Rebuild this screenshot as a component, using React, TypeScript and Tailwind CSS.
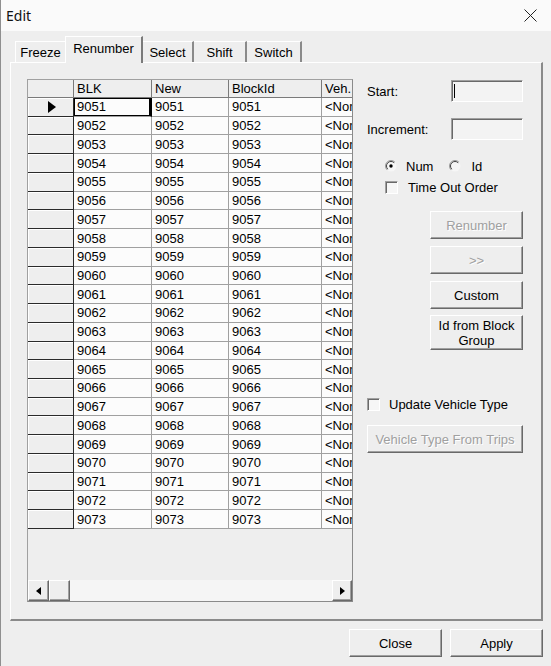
const rows = Array.from({ length: 23 }, (_, i) => String(9051 + i));

const raised =
  "border border-t-white border-l-white border-r-[#696969] border-b-[#696969] shadow-[inset_-1px_-1px_0_#a0a0a0]";
const sunken =
  "border border-t-[#a0a0a0] border-l-[#a0a0a0] border-r-white border-b-white shadow-[inset_1px_1px_0_#696969]";

function Radio({ checked }: { checked?: boolean }) {
  return (
    <svg width="12" height="12" viewBox="0 0 12 12" className="shrink-0">
      <circle cx="6" cy="6" r="5.5" fill="#f6f6f6" />
      <path d="M2.1 9.9 A5.5 5.5 0 0 1 9.9 2.1" fill="none" stroke="#9a9a9a" />
      <path d="M2.8 9.2 A4.5 4.5 0 0 1 9.2 2.8" fill="none" stroke="#444" />
      {checked && <circle cx="6" cy="6" r="1.7" fill="#000" />}
    </svg>
  );
}

function Check() {
  return <div className={`w-[13px] h-[13px] shrink-0 bg-[#f6f6f6] ${sunken}`} />;
}

function Btn({ label, disabled, className = "" }: { label: React.ReactNode; disabled?: boolean; className?: string }) {
  return (
    <div
      className={`flex items-center justify-center text-center leading-[15px] bg-[#eeeeee] ${raised} ${
        disabled ? "text-[#a0a0a0] [text-shadow:1px_1px_0_#fff]" : "text-black"
      } ${className}`}
    >
      {label}
    </div>
  );
}

function Tab({ label, w, selected, edge }: { label: string; w: string; selected?: boolean; edge?: boolean }) {
  if (selected) {
    return (
      <div
        className={`${w} h-[27px] relative z-10 -mb-px bg-[#eeeeee] border-l border-t border-l-white border-t-white border-r-2 border-r-[#7a7a7a] flex items-center justify-center pb-[3px]`}
      >
        {label}
      </div>
    );
  }
  return (
    <div
      className={`${w} h-[21px] border-t border-t-white ${
        edge ? "border-l border-l-white" : "border-r-2 border-r-[#8a8a8a]"
      } flex items-center justify-center`}
    >
      {label}
    </div>
  );
}

function DataGrid() {
  const cols = "grid grid-cols-[46px_78px_77px_93px_1fr]";
  const cell = "border-r border-b border-[#a0a0a0] pl-[3px] flex items-center overflow-hidden whitespace-nowrap bg-[#fcfcfc]";
  const rowHead = "border-r border-b border-[#2a2a2a] bg-[#eeeeee] shadow-[inset_1px_1px_0_#fff]";
  return (
    <div className="w-[326px] h-[523px] border border-t-[#a0a0a0] border-l-[#a0a0a0] border-r-[#8a8a8a] border-b-[#8a8a8a] flex flex-col overflow-hidden">
      <div className={`${cols} h-[18px] shrink-0`}>
        <div className="border-r border-b border-[#7a7a7a] bg-[#eeeeee]" />
        {["BLK", "New", "BlockId", "Veh."].map((h, i) => (
          <div
            key={h}
            className={`${i < 3 ? "border-r" : ""} border-b border-[#7a7a7a] bg-[#eeeeee] pl-[3px] flex items-center overflow-hidden whitespace-nowrap`}
          >
            {h}
          </div>
        ))}
      </div>
      {rows.map((r, i) => (
        <div key={r} className={`${cols} h-[18.74px] shrink-0`}>
          <div className={`${rowHead} flex items-center justify-center pl-[3px]`}>
            {i === 0 && (
              <svg width="8" height="12" viewBox="0 0 8 12">
                <path d="M0 0 L8 6 L0 12 Z" fill="#000" />
              </svg>
            )}
          </div>
          <div className={`${cell} ${i === 0 ? "shadow-[inset_0_0_0_1px_#000] !border-r-black border-r-2" : ""}`}>{r}</div>
          <div className={cell}>{r}</div>
          <div className={cell}>{r}</div>
          <div className={`${cell} !border-r-0`}>&lt;None&gt;</div>
        </div>
      ))}
      <div className="flex-1" />
      <div className="h-[21px] shrink-0 flex bg-[#f5f5f5]">
        <div className={`w-[21px] ${raised} bg-[#eeeeee] flex items-center justify-center`}>
          <svg width="5" height="8" viewBox="0 0 5 8">
            <path d="M5 0 L0 4 L5 8 Z" fill="#000" />
          </svg>
        </div>
        <div className={`w-[21px] ${raised} bg-[#eeeeee]`} />
        <div className="flex-1" />
        <div className={`w-[20px] ${raised} bg-[#eeeeee] flex items-center justify-center`}>
          <svg width="5" height="8" viewBox="0 0 5 8">
            <path d="M0 0 L5 4 L0 8 Z" fill="#000" />
          </svg>
        </div>
      </div>
    </div>
  );
}

export default function App() {
  return (
    <div className="w-[551px] h-[666px] overflow-hidden bg-[#eeeeee] border-l border-l-[#8f8f8f] text-[13px] leading-none text-black font-['Liberation_Sans',Arial,sans-serif] flex flex-col">
      <div className="h-[31px] shrink-0 bg-[#fafafa] flex items-center justify-between pl-[5px] pr-[14px]">
        <span className="text-[14px] font-['Noto_Sans',sans-serif] text-[#111]">Edit</span>
        <svg width="13" height="13" viewBox="0 0 13 13">
          <path d="M0.5 0.5 L12.5 12.5 M12.5 0.5 L0.5 12.5" stroke="#222" strokeWidth="1" />
        </svg>
      </div>

      <div className="h-[31px] shrink-0 flex items-end pl-[14px]">
        <Tab label="Freeze" w="w-[50px]" edge />
        <Tab label="Renumber" w="w-[78px]" selected />
        <Tab label="Select" w="w-[51px]" />
        <Tab label="Shift" w="w-[53px]" />
        <Tab label="Switch" w="w-[55px]" />
      </div>

      <div className="ml-[9px] w-[533px] h-[559px] shrink-0 border-t border-l border-t-white border-l-white border-r-2 border-b-2 border-r-[#8a8a8a] border-b-[#8a8a8a] flex pl-[16px] pt-[16px]">
        <DataGrid />
        <div className="ml-[14px] w-[156px] flex flex-col pt-[1px]">
          <div className="h-[22px] flex items-center">
            <span>Start:</span>
            <div className={`ml-auto w-[72px] h-[22px] bg-[#f3f3f3] ${sunken} flex items-center pl-[2px]`}>
              <div className="w-px h-[14px] bg-black" />
            </div>
          </div>
          <div className="mt-[16px] h-[22px] flex items-center">
            <span>Increment:</span>
            <div className={`ml-auto w-[72px] h-[22px] bg-[#f3f3f3] ${sunken}`} />
          </div>
          <div className="mt-[20px] h-[12px] flex items-center pl-[18px]">
            <Radio checked />
            <span className="ml-[9px]">Num</span>
            <span className="ml-[16px]">
              <Radio />
            </span>
            <span className="ml-[10px]">Id</span>
          </div>
          <div className="mt-[9px] h-[13px] flex items-center pl-[18px]">
            <Check />
            <span className="ml-[10px]">Time Out Order</span>
          </div>
          <Btn label="Renumber" disabled className="mt-[17px] ml-auto w-[93px] h-[28px]" />
          <Btn label=">>" disabled className="mt-[7px] ml-auto w-[93px] h-[28px]" />
          <Btn label="Custom" className="mt-[7px] ml-auto w-[93px] h-[28px]" />
          <Btn
            label={
              <span>
                Id from Block
                <br />
                Group
              </span>
            }
            className="mt-[6px] ml-auto w-[93px] h-[35px]"
          />
          <div className="mt-[48px] h-[13px] flex items-center">
            <Check />
            <span className="ml-[9px]">Update Vehicle Type</span>
          </div>
          <Btn label="Vehicle Type From Trips" disabled className="mt-[14px] w-[156px] h-[28px]" />
        </div>
      </div>

      <div className="mt-[8px] flex justify-end gap-[8px] pr-[8px]">
        <Btn label="Close" className="w-[93px] h-[28px]" />
        <Btn label="Apply" className="w-[93px] h-[28px]" />
      </div>
    </div>
  );
}
